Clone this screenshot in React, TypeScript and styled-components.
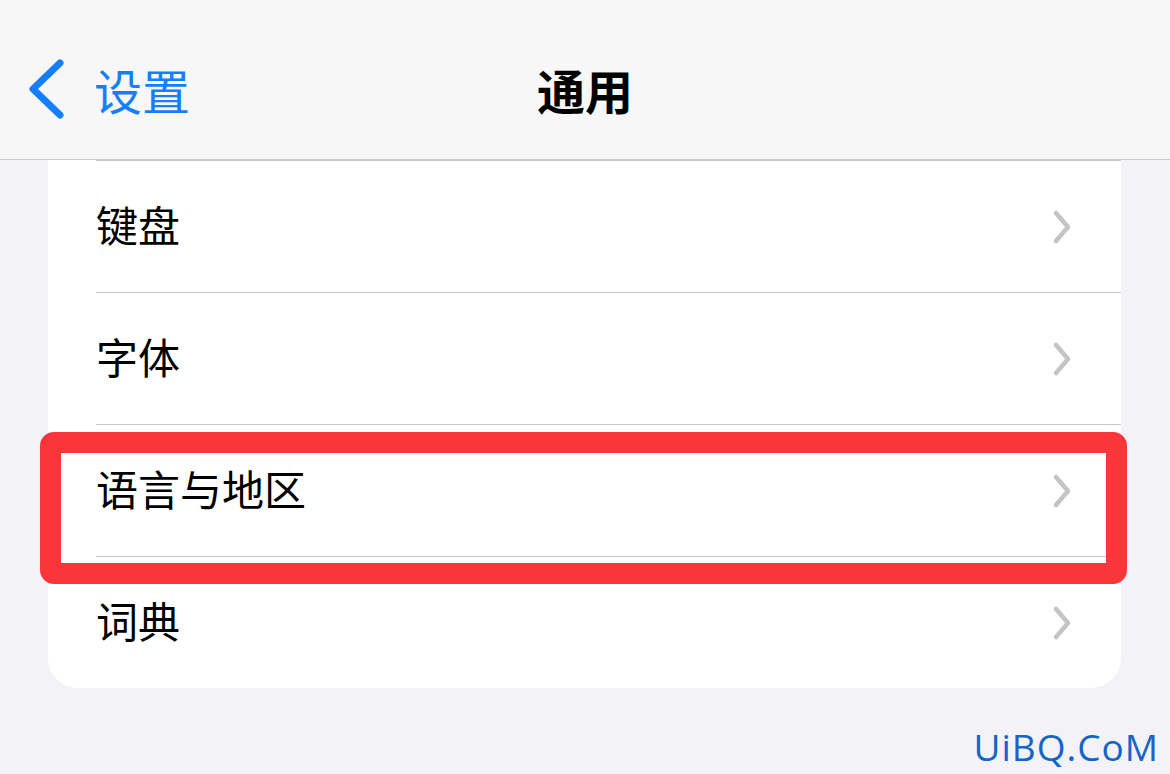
import React from 'react';
import styled, { createGlobalStyle } from 'styled-components';

const GlobalStyle = createGlobalStyle`
  html, body {
    margin: 0;
    padding: 0;
    background: #f2f2f7;
  }
  body {
    width: 1170px;
    height: 774px;
    overflow: hidden;
    font-family: 'Noto Sans CJK SC', 'Noto Sans', sans-serif;
  }
`;

const Screen = styled.div`
  position: relative;
  width: 1170px;
  height: 774px;
  background: #f2f2f7;
  display: flex;
  flex-direction: column;
`;

const NavBar = styled.div`
  height: 160px;
  box-sizing: border-box;
  padding-top: 43px;
  background: #f7f7f7;
  border-bottom: 1px solid #c9c9cc;
  display: grid;
  grid-template-columns: 1fr auto 1fr;
  align-items: start;
`;

const BackButton = styled.div`
  height: 92px;
  display: flex;
  align-items: center;
  gap: 28px;
  padding-left: 26px;
  color: #157efb;
  font-size: 48px;
  line-height: 1;
`;

const NavTitle = styled.div`
  height: 92px;
  display: flex;
  align-items: center;
  font-size: 48px;
  font-weight: 700;
  color: #000;
  line-height: 1;
`;

const Card = styled.div`
  margin: 0 49px 0 48px;
  background: #fff;
  border-radius: 0 0 30px 30px;
  border-top: 1px solid transparent;
  position: relative;
`;

const TopRule = styled.div`
  margin-left: 48px;
  height: 1px;
  background: #c8c8cb;
  margin-top: -1px;
`;

const Row = styled.div<{ $last?: boolean }>`
  position: relative;
  height: ${({ $last }) => ($last ? '131px' : '132px')};
  padding-left: 48px;
`;

const RowInner = styled.div<{ $last?: boolean }>`
  height: 100%;
  box-sizing: border-box;
  display: flex;
  align-items: center;
  justify-content: space-between;
  padding-right: 48px;
  border-bottom: ${({ $last }) => ($last ? 'none' : '1px solid #c8c8cb')};
`;

const RowLabel = styled.div`
  font-size: 42px;
  color: #000;
  line-height: 1;
  margin-top: -5px;
`;

const Highlight = styled.div`
  position: absolute;
  left: -8px;
  right: -6px;
  top: 7px;
  bottom: -27px;
  border: 21px solid #f9363a;
  border-radius: 14px;
  pointer-events: none;
  z-index: 2;
`;

const Watermark = styled.div`
  position: absolute;
  right: 11px;
  bottom: 2px;
  font-family: 'Open Sans', 'DejaVu Sans', sans-serif;
  font-size: 37px;
  color: #1565c8;
  letter-spacing: 1px;
`;

function BackChevron() {
  return (
    <svg width="40" height="60" viewBox="0 0 40 60">
      <path d="M34 4 L7 30 L34 56" fill="none" stroke="#157efb" strokeWidth="7" strokeLinecap="round" strokeLinejoin="round" />
    </svg>
  );
}

function Chevron() {
  return (
    <svg width="22" height="36" viewBox="0 0 22 36">
      <path d="M5 4 L17 18 L5 32" fill="none" stroke="#c4c4c7" strokeWidth="4.5" strokeLinecap="round" strokeLinejoin="round" />
    </svg>
  );
}

const items = ['键盘', '字体', '语言与地区', '词典'];

export default function App() {
  return (
    <Screen>
      <GlobalStyle />
      <NavBar>
        <BackButton>
          <BackChevron />
          <span>设置</span>
        </BackButton>
        <NavTitle>通用</NavTitle>
        <div />
      </NavBar>
      <Card>
        <TopRule />
        {items.map((label, i) => {
          const last = i === items.length - 1;
          return (
            <Row key={label} $last={last}>
              <RowInner $last={last}>
                <RowLabel>{label}</RowLabel>
                <Chevron />
              </RowInner>
              {label === '语言与地区' && <Highlight />}
            </Row>
          );
        })}
      </Card>
      <Watermark>UiBQ.CoM</Watermark>
    </Screen>
  );
}
